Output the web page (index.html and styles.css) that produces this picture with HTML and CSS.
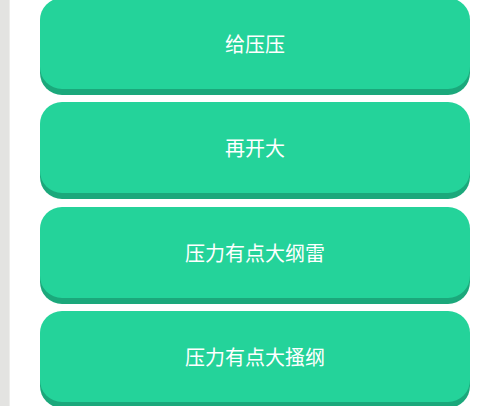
FILE: index.html
```html
<!DOCTYPE html>
<html lang="zh">
<head>
    <meta charset="UTF-8">
    <title>列表</title>
    <link rel="stylesheet" href="styles.css">
</head>
<body>
    <div class="page">
        <div class="side"></div>
        <div class="list">
            <button class="item">给压压</button>
            <button class="item">再开大</button>
            <button class="item">压力有点大纲雷</button>
            <button class="item">压力有点大搔纲</button>
        </div>
    </div>
</body>
</html>
```

FILE: styles.css
```css
html, body {
    margin: 0;
    height: 100%;
    overflow: hidden;
    background-color: #fff;
}

.page {
    display: flex;
    height: 100%;
}

.side {
    width: 9px;
    background-color: #e3e3e1;
    border-right: 1px solid #eeeeec;
    flex-shrink: 0;
}

.list {
    display: flex;
    flex-direction: column;
    gap: 13.3px;
    padding-left: 30px;
    margin-top: -2px;
}

.item {
    width: 430px;
    height: 91px;
    border: none;
    border-radius: 22px;
    background-color: #24d39a;
    box-shadow: 0 6px 0 #1ba87b;
    color: #fff;
    font-family: "Noto Sans CJK SC", "Noto Sans", sans-serif;
    font-size: 20px;
    padding: 0;
    flex-shrink: 0;
}
```
